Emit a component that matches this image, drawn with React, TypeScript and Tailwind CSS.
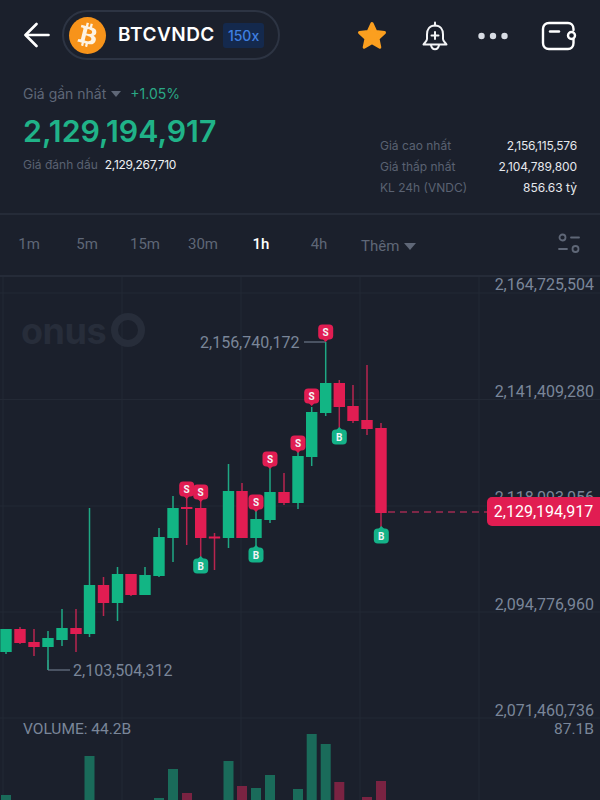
import { FaBtc } from 'react-icons/fa'

// x, open/close top, bottom, wick top, wick bottom, up
const candles: [number, number, number, number, number, boolean][] = [
  [6, 629, 652, 629, 654, true],
  [20, 629, 643, 627, 644, false],
  [34, 642, 647, 629, 656, false],
  [48, 638, 647, 631, 670, true],
  [62, 628, 640, 609, 646, true],
  [76, 628, 634, 609, 652, false],
  [89.5, 585, 634, 508, 637, true],
  [103.5, 585, 603, 577, 616, false],
  [117.5, 574, 603, 567, 621, true],
  [131, 574, 595, 574, 596, false],
  [145, 575, 595, 567, 595, true],
  [159, 537, 576, 528, 577, true],
  [173, 508, 538, 496, 562, true],
  [186.7, 507, 509, 496, 545, false],
  [200.7, 508, 538, 500, 557, false],
  [214.5, 536.5, 538.5, 533, 570, false],
  [228.5, 491, 538, 464, 548, true],
  [242, 491, 538, 483, 538, false],
  [256, 519, 538, 510, 547, true],
  [270, 492, 520, 467, 523, true],
  [284, 492, 503, 473, 505, false],
  [298, 456, 503, 450, 509, true],
  [311.7, 412, 457, 407, 466, true],
  [325.7, 383, 413, 342, 416, true],
  [339.3, 383, 407, 380, 430, false],
  [353, 406, 421, 385, 423, false],
  [367, 420, 429, 365, 435, false],
  [381, 428, 513, 423, 528, false],
]

const volumes: [number, number, boolean][] = [
  [6, 795, true],
  [89.5, 756, true],
  [159, 798, true],
  [173, 769, true],
  [187, 793, false],
  [228.5, 761, true],
  [242, 786, false],
  [256, 788, true],
  [270, 775, true],
  [298, 789, true],
  [311.7, 734, true],
  [325.7, 744, true],
  [339.3, 782, false],
  [367, 797, false],
  [381, 781, false],
]

const sells = [[325.7, 332], [311.7, 396], [298, 443], [270, 459], [256, 502], [186.7, 489], [200.7, 492]]
const buys = [[339.3, 437], [381.3, 536], [256, 555], [200.7, 566]]

const axis: [string, number][] = [
  ['2,164,725,504', 285],
  ['2,141,409,280', 392],
  ['2,118,093,056', 498],
  ['2,094,776,960', 605],
  ['2,071,460,736', 711],
]

const GREEN = '#12b584'
const RED = '#e11d52'

function Marker({ x, y, label }: { x: number; y: number; label: string }) {
  const fill = label === 'S' ? RED : '#14b288'
  return (
    <g>
      <rect x={x - 7.5} y={y - 7.5} width={15} height={15} rx={4} fill={fill} />
      <path
        d={label === 'S' ? `M${x - 3} ${y + 7}L${x} ${y + 10}L${x + 3} ${y + 7}Z` : `M${x - 3} ${y - 7}L${x} ${y - 10}L${x + 3} ${y - 7}Z`}
        fill={fill}
      />
      <text x={x} y={y + 3.5} textAnchor="middle" fontSize={10} fontWeight={700} fill="#f3f4f6" fontFamily="Roboto, sans-serif">
        {label}
      </text>
    </g>
  )
}

function Chart() {
  return (
    <svg className="absolute inset-0 w-full h-full" viewBox="0 277 600 523">
      {[3, 122, 241, 360, 479].map(x => (
        <line key={x} x1={x} x2={x} y1={277} y2={800} stroke="#232935" strokeWidth={1} />
      ))}
      {[293, 399.5, 506, 612, 718].map(y => (
        <line key={y} x1={0} x2={600} y1={y} y2={y} stroke="#232935" strokeWidth={1} />
      ))}

      {volumes.map(([x, top, up]) => (
        <rect key={x} x={x - 5} y={top} width={10} height={800 - top} fill={up ? '#1a6b5a' : '#7a2342'} />
      ))}

      {/* high / low callouts */}
      <line x1={304} x2={325.7} y1={342} y2={342} stroke="#7a8699" strokeWidth={1} />
      <path d="M48 660V670H70" fill="none" stroke="#7a8699" strokeWidth={1} />

      <line x1={388} x2={487} y1={512} y2={512} stroke="#a02a50" strokeWidth={1.5} strokeDasharray="7 5" />

      {candles.map(([x, top, bottom, wickTop, wickBottom, up]) => (
        <g key={x}>
          <line x1={x} x2={x} y1={wickTop} y2={wickBottom} stroke={up ? '#1fa884' : '#b8244f'} strokeWidth={1.5} />
          <rect x={x - 5.7} y={top} width={11.4} height={bottom - top} fill={up ? GREEN : RED} />
        </g>
      ))}

      {sells.map(([x, y]) => (
        <Marker key={x} x={x} y={y} label="S" />
      ))}
      {buys.map(([x, y]) => (
        <Marker key={x} x={x} y={y} label="B" />
      ))}

      <circle cx={128} cy={330} r={13.5} fill="none" stroke="#272d3a" strokeWidth={7} />
    </svg>
  )
}

export default function App() {
  return (
    <div className="w-[600px] h-[800px] overflow-hidden bg-[#1b202c] flex flex-col font-['Inter',sans-serif]">
      {/* Top bar */}
      <div className="h-[72px] flex items-start pt-[10px] shrink-0">
        <svg className="ml-[24px] mt-[12px]" width="26" height="26" viewBox="0 0 26 26" fill="none" stroke="#ffffff" strokeWidth="2.6" strokeLinecap="round" strokeLinejoin="round">
          <path d="M24.5 13H2" />
          <path d="M12.5 2L1.5 13L12.5 24" />
        </svg>
        <div className="ml-[12px] w-[218px] h-[50px] rounded-full border-2 border-[#2d3443] flex items-center pl-[5px]">
          <div className="w-[37px] h-[37px] rounded-full bg-[#f7931a] flex items-center justify-center">
            <FaBtc className="text-[#fdf3e3] text-[24px] rotate-[14deg]" />
          </div>
          <span className="ml-[12px] text-[19px] font-semibold text-white tracking-[0.5px]">BTCVNDC</span>
          <span className="ml-[8px] px-[5px] h-[25px] flex items-center rounded-[3px] bg-[#14294d] text-[#3f7fe0] text-[14px] font-medium">150x</span>
        </div>
        <svg className="ml-[77px] mt-[11px]" width="30" height="29" viewBox="0 0 30 29">
          <path d="M15 2.500L18.800 10.600L27.500 11.600L21 17.600L22.800 26.200L15 21.800L7.200 26.200L9 17.600L2.500 11.600L11.200 10.600Z" fill="#fb9f1f" stroke="#fb9f1f" strokeWidth="3" strokeLinejoin="round" />
        </svg>
        <svg className="ml-[34px] mt-[11px]" width="28" height="30" viewBox="0 0 28 30" fill="none" stroke="#f3f4f6" strokeWidth="2" strokeLinecap="round" strokeLinejoin="round">
          <path d="M14 1.500V4.500" />
          <path d="M14 4.500C8.500 4.500 6 8.500 6 13.500V18C6 20.500 3 22 2.500 23.500H25.500C25 22 22 20.500 22 18V13.500C22 8.500 19.500 4.500 14 4.500Z" />
          <path d="M10 24C10.500 27 12 28.300 14 28.300C16 28.300 17.500 27 18 24" />
          <path d="M14 11V18M10.500 14.500H17.500" />
        </svg>
        <svg className="ml-[29px] mt-[21px]" width="30" height="10" viewBox="0 0 30 10" fill="#d8dce4">
          <circle cx="3.500" cy="5" r="3.200" />
          <circle cx="15" cy="5" r="3.200" />
          <circle cx="26.500" cy="5" r="3.200" />
        </svg>
        <svg className="ml-[33px] mt-[11px]" width="36" height="30" viewBox="0 0 36 30" fill="none" stroke="#ffffff" strokeWidth="2.400" strokeLinecap="round">
          <path d="M32.500 9V8C32.500 4 30 2 27 2H8C4.500 2 2 4.500 2 8V22C2 25.500 4.500 28 8 28H27C30 28 32.500 26 32.500 22V18" />
          <path d="M9 10.500H18" />
          <rect x="27" y="11" width="7" height="7" rx="3.500" />
        </svg>
      </div>

      {/* Price summary */}
      <div className="h-[143px] shrink-0 flex justify-between px-[23px] border-b-2 border-[#252b38]">
        <div>
          <div className="mt-[11px] flex items-center h-[20px] text-[14px]">
            <span className="text-[#5f6777]">Giá gần nhất</span>
            <span className="ml-[5px] mt-[1px] w-0 h-0 border-x-[5px] border-x-transparent border-t-[6px] border-t-[#5f6777]" />
            <span className="ml-[9px] text-[#2aa885]">+1.05%</span>
          </div>
          <div className="mt-[6px] text-[30.300px] leading-[44px] font-semibold text-[#20b388]">2,129,194,917</div>
          <div className="mt-[3px] flex items-center text-[12px] leading-[18px]">
            <span className="text-[#5a6272]">Giá đánh dấu</span>
            <span className="ml-[7px] text-[#eef0f3] tracking-[-0.300px]">2,129,267,710</span>
          </div>
        </div>
        <div className="w-[197px] mt-[63px] text-[12px] leading-[21px]">
          <div className="flex justify-between">
            <span className="text-[#5a6272]">Giá cao nhất</span>
            <span className="text-[#e6e8ec] tracking-[-0.200px]">2,156,115,576</span>
          </div>
          <div className="flex justify-between">
            <span className="text-[#5a6272]">Giá thấp nhất</span>
            <span className="text-[#e6e8ec] tracking-[-0.100px]">2,104,789,800</span>
          </div>
          <div className="flex justify-between">
            <span className="text-[#5a6272]">KL 24h (VNDC)</span>
            <span className="text-[#e6e8ec]">856.63 tỷ</span>
          </div>
        </div>
      </div>

      {/* Timeframes */}
      <div className="h-[62px] pb-[2px] shrink-0 flex items-center border-b-2 border-[#252b38] font-['Roboto',sans-serif] text-[15px] text-[#5f6777]">
        {['1m', '5m', '15m', '30m'].map(t => (
          <span key={t} className="w-[58px] text-center">{t}</span>
        ))}
        <span className="w-[58px] text-center text-white font-medium">1h</span>
        <span className="w-[58px] text-center">4h</span>
        <span className="ml-[13px] mt-[4px]">Thêm</span>
        <span className="ml-[5px] mt-[4px] w-0 h-0 border-x-[6px] border-x-transparent border-t-[7px] border-t-[#5f6777]" />
        <svg className="ml-auto mr-[19px]" width="24" height="24" viewBox="0 0 24 24" fill="none" stroke="#5f6777" strokeWidth="1.800" strokeLinecap="round">
          <circle cx="5.500" cy="5.500" r="3" />
          <path d="M14 5.500H22" />
          <path d="M2 17H10" />
          <circle cx="18.500" cy="17" r="3" />
        </svg>
      </div>

      {/* Chart */}
      <div className="relative flex-1 font-['Roboto',sans-serif] text-[16px] leading-[16px] text-[#7a8699]">
        <span className="absolute left-[21px] top-[36px] text-[36px] leading-[36px] font-bold text-[#272d3a] font-['Inter',sans-serif] tracking-[-0.5px]">onus</span>
        <Chart />
        <span className="absolute left-[200px] top-[58px]">2,156,740,172</span>
        <span className="absolute left-[73px] top-[386px]">2,103,504,312</span>
        {axis.map(([label, y]) => (
          <span key={label} className="absolute right-[6px]" style={{ top: y - 285 }}>{label}</span>
        ))}
        <span className="absolute left-[487px] right-0 top-[220px] h-[29px] rounded-l-[5px] bg-[#e11d52] text-white flex items-center justify-center">2,129,194,917</span>
        <span className="absolute left-[23px] top-[444px] text-[15.500px]">VOLUME: 44.2B</span>
        <span className="absolute right-[6px] top-[444px] text-[15.500px]">87.1B</span>
      </div>
    </div>
  )
}
